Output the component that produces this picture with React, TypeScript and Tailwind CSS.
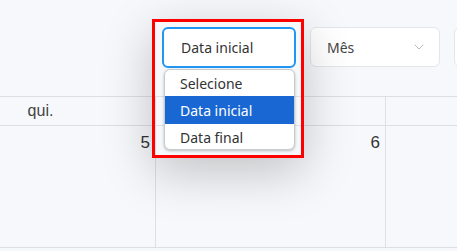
import { ChevronDown } from "lucide-react";

const days = [
  { label: "qui.", num: "5" },
  { label: "", num: "6" },
  { label: "", num: "" },
];

export default function App() {
  return (
    <div className="relative w-[457px] h-[251px] overflow-hidden bg-[#f6f8fb] font-['Noto_Sans',sans-serif]">
      {/* toolbar */}
      <div className="flex items-start gap-[14px] pl-[162px] pt-[27px]">
        <div className="w-[134px] h-[41px] shrink-0 rounded-[6px] border-2 border-[#2196f3] bg-white flex items-center pl-[17px] text-[14px] text-[#333]">
          Data inicial
        </div>
        <div className="w-[130px] h-[40px] shrink-0 rounded-[6px] border border-[#e3e6ea] bg-white flex items-center justify-between pl-[16px] pr-[12px] text-[14px] text-[#444]">
          <span>Mês</span>
          <ChevronDown className="h-4 w-4 text-[#b5b8bd]" strokeWidth={1.5} />
        </div>
        <div className="w-[130px] h-[40px] shrink-0 rounded-[6px] border border-[#e3e6ea] bg-white" />
      </div>

      {/* calendar */}
      <div className="mt-[28px] ml-[-74px] flex font-['Liberation_Sans',sans-serif] text-[#333]">
        {days.map((d, i) => (
          <div key={i} className="w-[230px] shrink-0 border-r border-[#dcdfe3]">
            <div className="h-[30px] border-y border-[#dcdfe3] flex items-center justify-center text-[16px] text-[#444]">
              {d.label}
            </div>
            <div className="h-[122px] border-b border-[#dcdfe3] text-right pr-[5px] pt-[4px] text-[17px]">
              {d.num}
            </div>
          </div>
        ))}
      </div>

      {/* highlight box + open dropdown */}
      <div className="absolute left-[152px] top-[19px] w-[152px] h-[139px] border-[3px] border-[#ff0000] shadow-[0_14px_50px_rgba(0,0,0,0.22)]" />
      <div className="absolute left-[164px] top-[69px] w-[131px] h-[81px] rounded-[6px] border border-[#c8cacd] bg-white overflow-hidden shadow-[0_1px_3px_rgba(0,0,0,0.25)] text-[14px] text-[#333]">
        <div className="h-[26px] flex items-center pl-[15px]">Selecione</div>
        <div className="h-[28px] flex items-center pl-[15px] bg-[#1967d2] text-white">Data inicial</div>
        <div className="h-[26px] flex items-center pl-[15px]">Data final</div>
      </div>
    </div>
  );
}
